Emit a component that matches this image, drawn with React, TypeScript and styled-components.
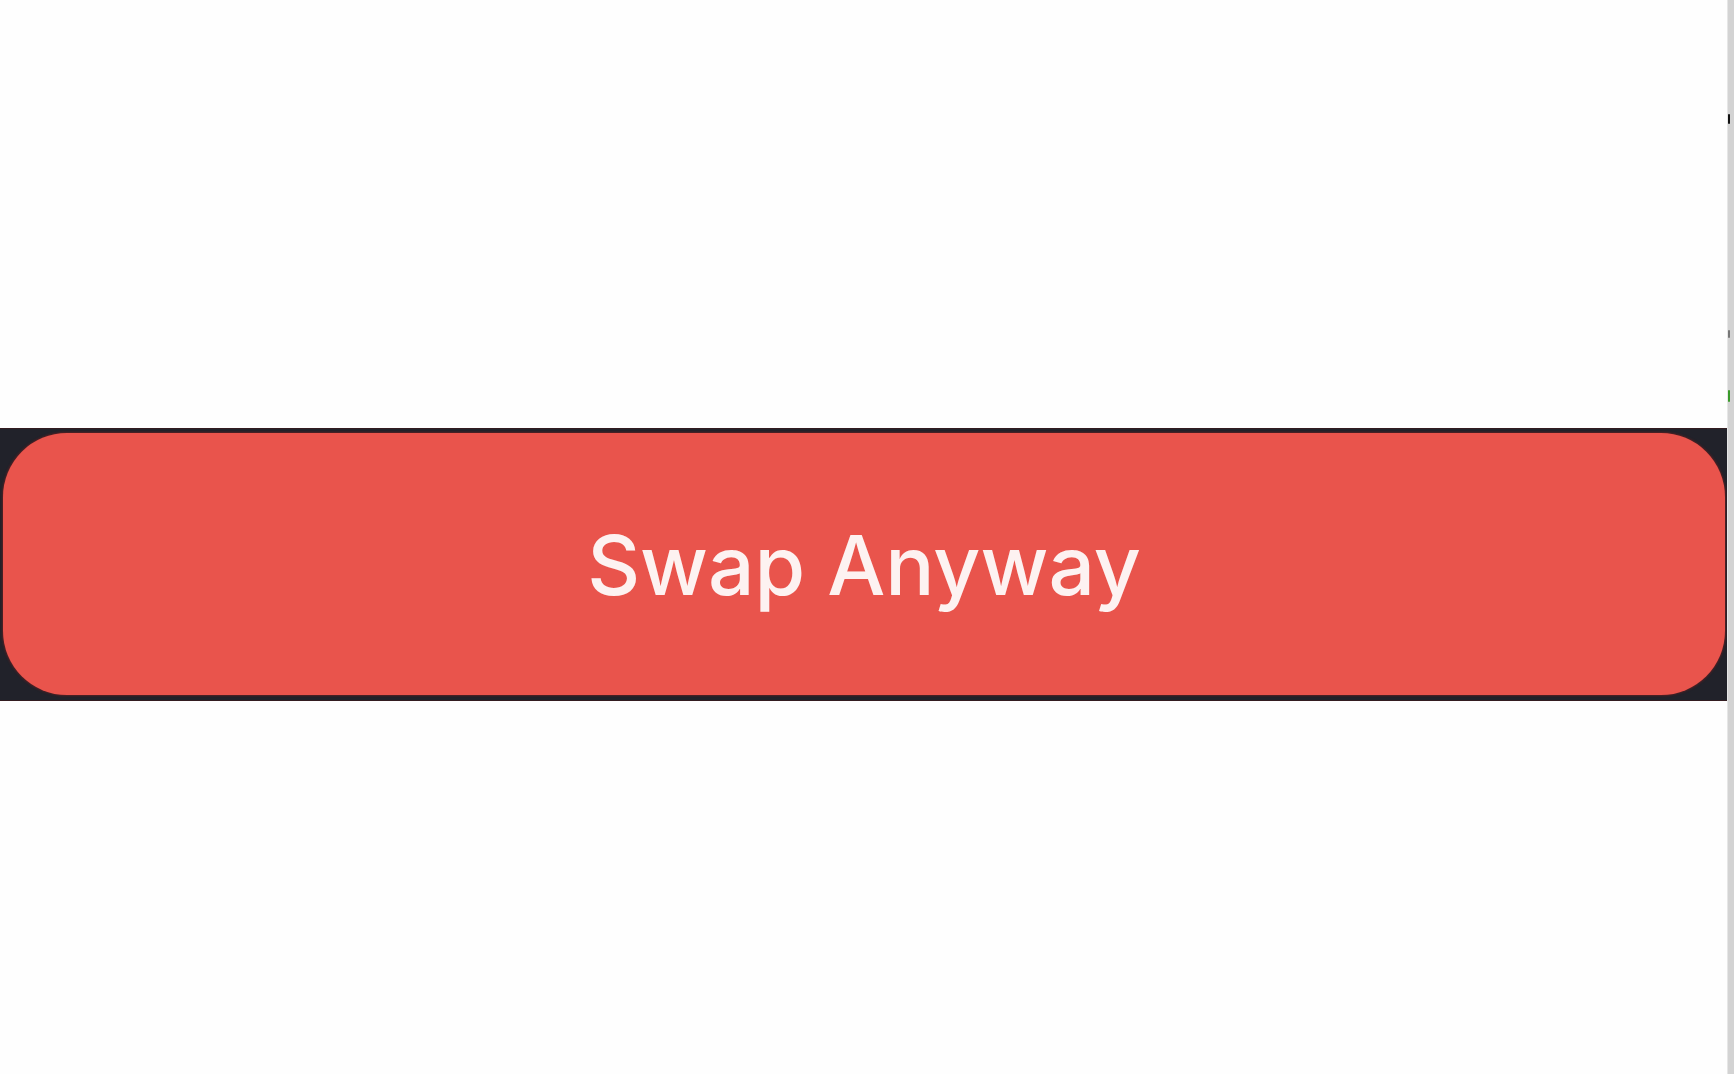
import React from "react";
import styled, { createGlobalStyle } from "styled-components";

const GlobalStyle = createGlobalStyle`
  html, body {
    margin: 0;
    padding: 0;
    background: #ffffff;
    overflow: hidden;
  }
  body {
    font-family: Inter, "Noto Sans", sans-serif;
  }
`;

const Page = styled.div`
  width: 1734px;
  height: 1074px;
  display: flex;
  flex-direction: row;
  background: #fefefe;
`;

const Main = styled.div`
  flex: 1;
  display: flex;
  flex-direction: column;
  padding-top: 428px;
`;

const Band = styled.div`
  height: 273px;
  box-sizing: border-box;
  padding: 4px 2px 5px 3px;
  background: #21222a;
  border-top: 1px solid #331c20;
  border-bottom: 1px solid #331c20;
`;

const SwapButton = styled.button`
  width: 100%;
  height: 100%;
  border: none;
  border-radius: 64px;
  background: #e9544c;
  box-shadow: 0 0 2px 1px rgba(120, 30, 30, 0.6);
  color: #fdf2f1;
  font-family: Inter, "Noto Sans", sans-serif;
  font-size: 82px;
  font-weight: 500;
  cursor: pointer;
  display: flex;
  align-items: center;
  justify-content: center;
  padding: 2px 0 0 0;
`;

const Scrollbar = styled.div`
  width: 6px;
  background: #d3d3d3;
  border-left: 1px solid #e6e6e6;
  position: relative;
  overflow: hidden;
`;

// clipped bits of whatever sits past the right edge
const Speck = styled.span<{ top: number; color: string; h: number }>`
  position: absolute;
  left: 0;
  top: ${(p) => p.top}px;
  width: 2px;
  height: ${(p) => p.h}px;
  border-radius: 1px;
  background: ${(p) => p.color};
`;

export default function App() {
  return (
    <>
      <GlobalStyle />
      <Page>
        <Main>
          <Band>
            <SwapButton>Swap Anyway</SwapButton>
          </Band>
        </Main>
        <Scrollbar>
          <Speck top={114} h={10} color="#111" />
          <Speck top={330} h={8} color="#777" />
          <Speck top={390} h={12} color="#3a9a2a" />
        </Scrollbar>
      </Page>
    </>
  );
}
